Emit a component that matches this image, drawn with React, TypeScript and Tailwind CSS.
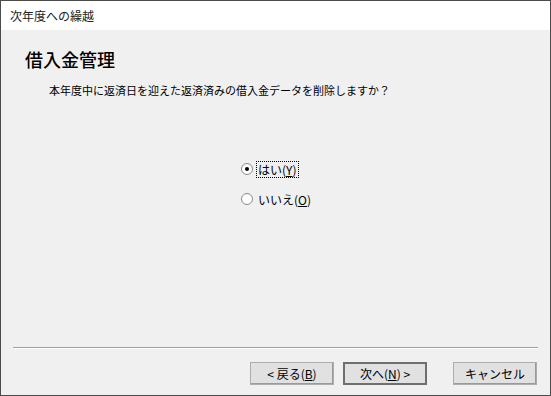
import React from "react";

const font = { fontFamily: '"Noto Sans CJK JP", "Noto Sans", sans-serif' };

function Radio({ checked }: { checked?: boolean }) {
  return (
    <span className="relative inline-flex h-[12px] w-[12px] items-center justify-center rounded-full border border-[#8a8a8a] bg-white">
      {checked && <span className="h-[4px] w-[4px] rounded-full bg-black" />}
    </span>
  );
}

function Btn({ children, def }: { children: React.ReactNode; def?: boolean }) {
  return (
    <div
      className={`flex h-[23px] w-[84px] items-center justify-center bg-[#e1e1e1] text-[12px] leading-none text-black ${
        def ? "border-2 border-[#6f6f6f]" : "border border-[#adadad] shadow-[inset_-1px_-1px_0_#9a9a9a]"
      }`}
    >
      {children}
    </div>
  );
}

export default function App() {
  return (
    <div className="h-[396px] w-[551px] overflow-hidden" style={font}>
      <div className="flex h-full w-full flex-col border border-[#4b4b4b] bg-[#f0f0f0]">
        <div className="flex h-[29px] items-center bg-white pl-[9px] text-[12px] text-[#222]">次年度への繰越</div>
        <div className="flex flex-1 flex-col">
          <div className="pl-[24px] pt-[15px] text-[18px] font-medium leading-[28px] text-black">借入金管理</div>
          <div className="pl-[48px] pt-[8px] text-[11px] leading-[18px] text-black">
            本年度中に返済日を迎えた返済済みの借入金データを削除しますか？
          </div>
          <div className="flex flex-col gap-[12px] pl-[240px] pt-[61px] text-[12px] text-black">
            <div className="flex h-[18px] items-center gap-[3px]">
              <Radio checked />
              <span className="border border-dotted border-black px-[1px] leading-[15px]">
                はい(<span className="underline">Y</span>)
              </span>
            </div>
            <div className="flex h-[18px] items-center gap-[3px]">
              <Radio />
              <span className="px-[2px] leading-[15px]">
                いいえ(<span className="underline">O</span>)
              </span>
            </div>
          </div>
          <div className="flex-1" />
          <div className="mx-[12px] h-[2px] border-t border-[#a0a0a0] bg-white" />
          <div className="flex h-[46px] items-start justify-end pr-[13px] pt-[13px]">
            <div className="flex gap-[9px]">
              <Btn>
                &lt; 戻る(<span className="underline">B</span>)
              </Btn>
              <Btn def>
                次へ(<span className="underline">N</span>) &gt;
              </Btn>
            </div>
            <div className="ml-[26px]">
              <Btn>キャンセル</Btn>
            </div>
          </div>
        </div>
      </div>
    </div>
  );
}
